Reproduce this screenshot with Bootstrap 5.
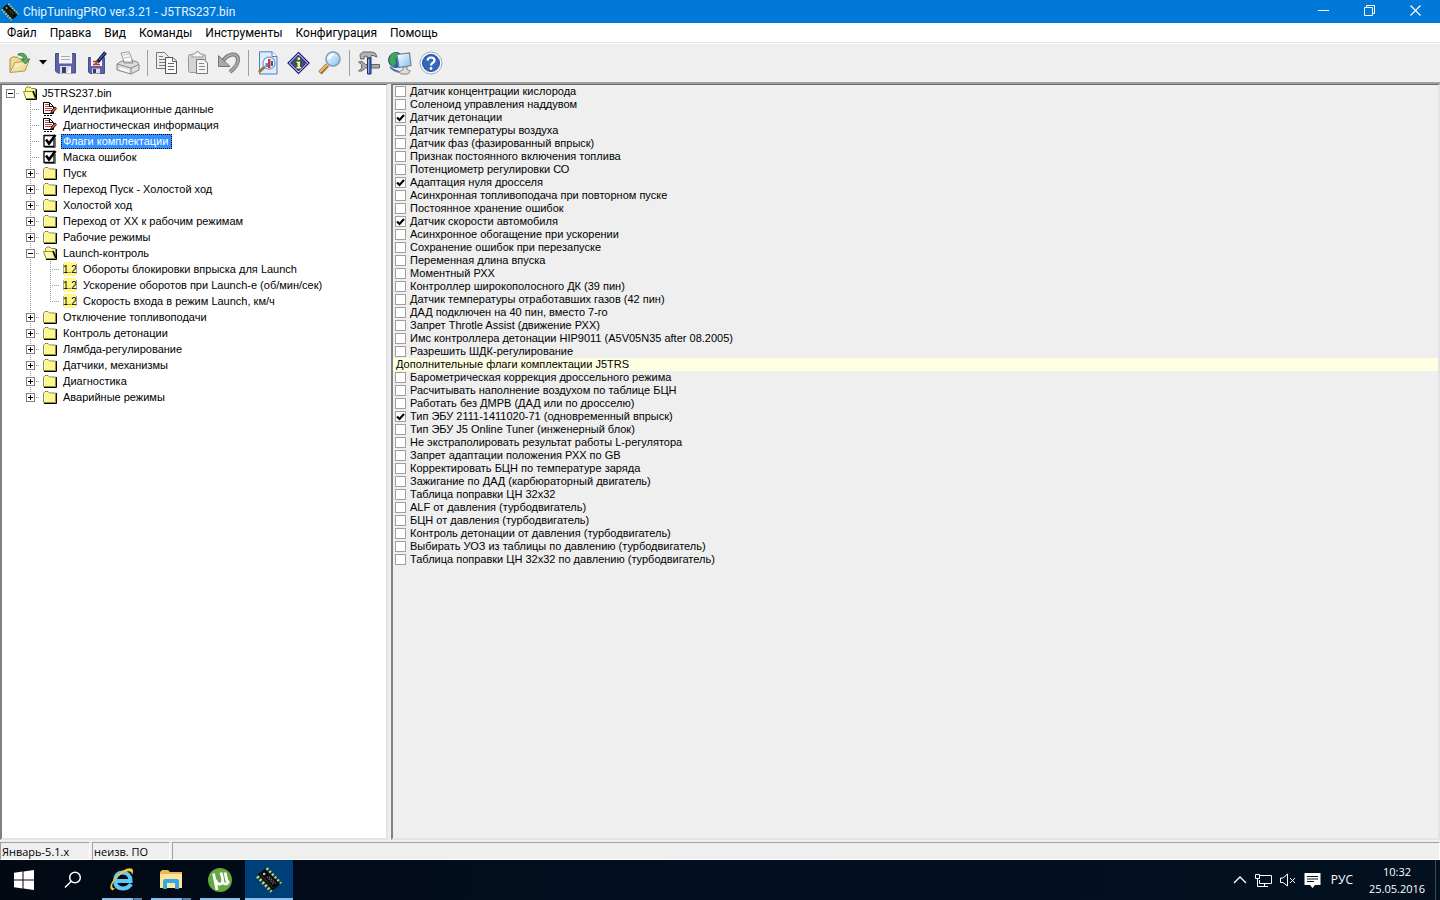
<!DOCTYPE html>
<html lang="ru">
<head>
<meta charset="utf-8">
<meta name="viewport" content="width=device-width, initial-scale=1">
<title>ChipTuningPRO ver.3.21 - J5TRS237.bin</title>
<link href="https://cdn.jsdelivr.net/npm/bootstrap@5.3.0/dist/css/bootstrap.min.css" rel="stylesheet">
<style>
body{font-family:"Open Sans","Noto Sans",sans-serif;font-size:12px;line-height:16px;color:#000;background:#efefef}
button{font:inherit;border:0;background:none;color:inherit;padding:0}
svg{display:block;flex:none}
.titlebar{height:23px;background:#0078d7;color:#e8f4ff;font-family:Roboto,"Open Sans",sans-serif}
.titlebar h1{font-size:12px;line-height:22px;margin:0 0 0 3px;font-weight:400}
.winbtn{width:46px;height:20px;display:grid;place-items:center}
.winset{margin:0 2px 2px auto}
.menubar{height:19px;background:#fff;font-family:Roboto,"Open Sans",sans-serif}
.menubar a{color:#000;text-decoration:none;padding:2px 6px 2px 7px;line-height:16px;display:block}
.toolbar{height:42px;border-top:1px solid #e6e6e6;border-bottom:2px solid #a0a0a0;box-shadow:inset 0 1px #fff;padding-left:4px}
.tool{width:31px;height:30px;display:grid;place-items:center}
.tool.drop{width:15px}
.tsep{width:1px;height:26px;background:#a0a0a0;margin:0 3px 0 4px}
.pane{border:2px solid;border-color:#696969 #e3e3e3 #e3e3e3 #808080;border-top-width:1px}
.treepane{width:388px;flex:none;background:#fff;margin-right:3px}
.legacy{font-family:"Liberation Sans",Arial,sans-serif;font-size:11px}
.tree,.tree ul{list-style:none;margin:0;padding:0}
.tree ul{margin-left:20px;background:repeating-linear-gradient(#999 0 1px,transparent 1px 2px) 10px 0/1px calc(100% - 8px) no-repeat}
.tree>li>ul{margin-left:18px}
.node{height:16px;display:flex;align-items:center}
.knot{width:20px;height:16px;display:grid;place-items:center;padding-left:1px;background:repeating-linear-gradient(90deg,#999 0 1px,transparent 1px 2px) 10px 8px/12px 1px no-repeat;flex:none}
.tree>li>.node .knot{width:18px;padding:0 1px 0 0}
.pm{width:9px;height:9px;border:1px solid #808080;background:linear-gradient(#000,#000) center/5px 1px no-repeat #fff}
.pm.plus{background:linear-gradient(#000,#000) center/5px 1px no-repeat,linear-gradient(#000,#000) center/1px 5px no-repeat #fff}
.node svg{margin:0 3px 0 2px}
.cap{border:1px solid transparent;padding:0 1px 0 0;line-height:13px;white-space:nowrap;color:#000;text-decoration:none}
.tree ul .cap{padding:0 3px 0 1px}
.cap.picked{background:#3390ff;color:#fff;border:1px dotted #000}
.flags{margin:0;padding:0;list-style:none}
.flags li{height:13px;line-height:13px;display:flex;align-items:center;padding-left:2px;white-space:nowrap}
.flags label{padding-left:4px}
.flags .group{background:#ffffe1;padding-left:3px}
.tick{appearance:none;width:11px;height:11px;margin:0;border:1px solid #a0a0a0;background:#fff;flex:none}
.tick:checked{background:#fff url("data:image/svg+xml,%3Csvg xmlns='http://www.w3.org/2000/svg' viewBox='0 0 9 9'%3E%3Cpath d='M1 4.5L3.5 7L8 2' fill='none' stroke='%23000' stroke-width='2.2'/%3E%3C/svg%3E") center/9px 9px no-repeat}
.statusbar{height:18px;margin-top:2px;gap:2px;font-size:11px}
.statusbar div{border:1px solid;border-color:#a0a0a0 #fff #fff #a0a0a0;padding-left:1px;line-height:17px}
.st1{width:90px}.st2{width:78px}
.taskbar{height:40px;background:linear-gradient(90deg,#020913,#020f22 50%,#03101f);color:#fff}
.task{width:48px;height:40px;display:grid;place-items:center;position:relative;margin-right:1px}
.task.live::after{content:"";position:absolute;left:4px;right:4px;bottom:0;height:2px;background:#86bfee}
.task.many::after{background:linear-gradient(90deg,#86bfee 31px,#24486a 31px 32px,#5486b0 32px)}
.task.front{background:#004078}
.task.front::after{left:0;right:0}
.lang{margin-left:6px;padding:0 4px}
.clock{width:56px;text-align:center;font-size:11px;line-height:17px;margin:0 10px 0 12px;white-space:nowrap}
.peek{width:5px;border-left:1px solid #3b4652;height:40px}
</style>
</head>
<body class="d-flex flex-column vh-100 overflow-hidden">
<svg width="0" height="0" class="position-absolute" aria-hidden="true">
<defs>
<linearGradient id="sky" x2="1" y2="1"><stop stop-color="#fff"/><stop offset="1" stop-color="#80c0ee"/></linearGradient>
<linearGradient id="fold" x2="1" y2="1"><stop stop-color="#fffbd8"/><stop offset="1" stop-color="#e5cf7d"/></linearGradient>
<symbol id="closed" viewBox="0 0 16 16"><path d="M2 14.500H14.500V4" fill="none" stroke="#000"/><path d="M1.500 13.500V4L3 2.500H6L7.500 4H13.500V13.500Z" fill="#fff78e" stroke="#8c8b4b"/><path d="M2.500 12.500V4.500L3.500 3.500" fill="none" stroke="#fff"/></symbol>
<symbol id="opened" viewBox="0 0 16 16"><path d="M14.500 4V14.500H4" fill="none" stroke="#000"/><path d="M3.500 13V3.500L5 2H8L9.500 3.500H13.500V13.500Z" fill="#fff78e" stroke="#8c8b4b"/><path d="M1.500 6.500H10.500L13 13.500H4Z" fill="#fffab0" stroke="#8c8b4b"/><path d="M11 6L14 13" stroke="#000" stroke-width="1.500"/></symbol>
<symbol id="edit" viewBox="0 0 16 16"><path d="M1.500 1.500H7.500L11.500 5.500V12.500H1.500Z" fill="#fff" stroke="#000"/><path d="M3 3.500H7M3 5.500H9M3 7.500H10M3 9.500H10" stroke="#b8484c"/><path d="M7.500 2V5.500H11" fill="none" stroke="#000"/><path d="M8.500 12.500L10 9L13 6L14.500 7.500L11.500 11Z" fill="#e0553a" stroke="#000" stroke-width=".8"/><path d="M2 14.500H10" stroke="#000" stroke-dasharray="2 1"/></symbol>
<symbol id="flag" viewBox="0 0 16 16"><path d="M3 14.500H13.500V5" fill="none" stroke="#777"/><path d="M2 2.500H12V13.500H2Z" fill="#fff" stroke="#000" stroke-width="1.300"/><path d="M4 6.500L7 10.500L13.500 2" fill="none" stroke="#000" stroke-width="2.600"/></symbol>
<symbol id="num" viewBox="0 0 16 16"><path d="M2 1H14V15H2Z" fill="#fff787"/><path d="M1.500 3V13M14.500 3V13" stroke="#aaa"/></symbol>
<symbol id="chip" viewBox="0 0 24 24"><path d="M2 8L15 22M9 2L22 16" stroke="#d3dc4a" stroke-width="5" stroke-dasharray="1.800 1.800"/><path d="M1.500 7L8.500 1.500L22.500 16L15.500 22Z" fill="#0c0c0c"/><path d="M4 7L15.500 19" stroke="#444" stroke-width=".8"/><circle cx="7.500" cy="6.500" r="1.200" fill="#bbb"/><path d="M10 9L16 15.500M12 9L18 15" stroke="#777" stroke-dasharray="1.500 1"/></symbol>
</defs></svg>

<header class="titlebar d-flex align-items-center">
<svg width="20" height="18"><use href="#chip"/></svg>
<h1>ChipTuningPRO ver.3.21 - J5TRS237.bin</h1>
<div class="d-flex winset">
<button class="winbtn" aria-label="Свернуть"><svg width="11" height="11"><path d="M0 5.500H11" stroke="#fff"/></svg></button>
<button class="winbtn" aria-label="Восстановить"><svg width="11" height="11"><path d="M.5 2.500H8.500V10.500H.5ZM2.500 2.500V.5H10.500V8.500H8.500" fill="none" stroke="#fff"/></svg></button>
<button class="winbtn" aria-label="Закрыть"><svg width="11" height="11"><path d="M.5 .5L10.500 10.500M10.500 .5L.5 10.500" stroke="#fff" stroke-width="1.200"/></svg></button>
</div>
</header>

<nav class="menubar d-flex" aria-label="Меню">
<a href="#">Файл</a><a href="#">Правка</a><a href="#">Вид</a><a href="#">Команды</a><a href="#">Инструменты</a><a href="#">Конфигурация</a><a href="#">Помощь</a>
</nav>

<div class="toolbar d-flex align-items-center" role="toolbar">
<button class="tool" aria-label="Открыть"><svg width="24" height="24"><path d="M2 21V8L4 6H9L11 8H17V11" fill="#eedb94" stroke="#a58e43"/><path d="M2 21.500L7 11.500L21 10L17 20Z" fill="url(#fold)" stroke="#b69c4d"/><path d="M10 3Q18 0 19 8H22L17.500 13L13 8.500H16Q15 4 10 4Z" fill="#5aa862" stroke="#28733a" stroke-width=".8"/></svg></button>
<button class="tool drop" aria-label="Недавние файлы"><svg width="8" height="5"><path d="M0 0H8L4 4.500Z"/></svg></button>
<button class="tool" aria-label="Сохранить"><svg width="24" height="24"><path d="M1.500 2.500H21.500V22H3.500L1.500 20Z" fill="#5b60a8" stroke="#4a4d8c"/><path d="M5 2H18V12.500H5Z" fill="#f3f3f3"/><path d="M7 5.500H16M7 8.500H16" stroke="#aaa"/><path d="M6 15H17V22.500H6Z" fill="#ddd"/><path d="M8 16H12V22H8Z" fill="#3b3e75"/><path d="M13 22L17 15V22Z" fill="#fff"/></svg></button>
<button class="tool" aria-label="Сохранить как"><svg width="24" height="24"><path d="M3.500 6.500H19.500V22.500H5L3.500 21Z" fill="#5b60a8" stroke="#4a4d8c"/><path d="M6 6H17V15H6Z" fill="#f7f7f7"/><path d="M8 10.500H12M8 13.500H15" stroke="#cc2d27" stroke-width="1.500"/><path d="M7 17.500H15V22.500H7Z" fill="#ddd"/><path d="M8 18H11V22H8Z" fill="#343779"/><path d="M12.500 11L20.500 1.500" stroke="#10204d" stroke-width="3.500"/><path d="M14 9L20 2" stroke="#5683c8"/><path d="M10 13.500L12.500 10.500" stroke="#b64a32" stroke-width="2"/></svg></button>
<button class="tool" aria-label="Печать"><svg width="24" height="24"><path d="M5 2L13 .8L17 11H8Z" fill="#fafafa" stroke="#999"/><path d="M7 4L13 3M8 7L14 6" stroke="#bbb"/><path d="M1 13L7 9.500L8 12H17L16 9L22 11.500L23 14V19L15 23L1 19Z" fill="#ddd" stroke="#888"/><path d="M1 13L15 17L23 13.500M15 17V23" fill="none" stroke="#888"/><path d="M4 17.500L13 20.500" stroke="#fff" stroke-width="2"/></svg></button>
<span class="tsep"></span>
<button class="tool" aria-label="Копировать"><svg width="24" height="24"><path d="M1.500 1.500H9.500L13.500 5.500V17.500H1.500Z" fill="#eee" stroke="#777"/><path d="M4 5.500H8M4 8.500H10M4 11.500H10M4 14.500H10" stroke="#777"/><path d="M10.500 6.500H18L21.500 10V22.500H10.500Z" fill="#fafafa" stroke="#555"/><path d="M17.500 6.500V10.500H21.500M13 12.500H19M13 15.500H19M13 18.500H19" fill="none" stroke="#666"/></svg></button>
<button class="tool" aria-label="Вставить"><svg width="24" height="24"><rect x="2.500" y="3.500" width="17" height="18" rx="2" fill="#d4d4d4" stroke="#999"/><path d="M6 6V3H9L10 .8H13L14 3H17V6Z" fill="#f6f6f6" stroke="#999"/><path d="M10.500 8.500H18L21.500 12V22.500H10.500Z" fill="#f5f5f5" stroke="#777"/><path d="M13 12.500H18M13 15.500H19M13 18.500H19" stroke="#888"/></svg></button>
<button class="tool" aria-label="Отменить"><svg width="24" height="24"><path d="M5 11C11 2 20 1 21 8C21.500 13 18 17 13 21" fill="none" stroke="#777" stroke-width="4"/><path d="M5 11C11 2 20 1 21 8C21.500 13 18 17 13 21" fill="none" stroke="#aaa" stroke-width="2"/><path d="M1.500 4.500V15.500H13L9 11.500L5 8Z" fill="#aaa" stroke="#777"/></svg></button>
<span class="tsep"></span>
<button class="tool" aria-label="Просмотр"><svg width="24" height="24"><path d="M3.500 .8H16L21 5.500V23H3.500Z" fill="#dcecff" stroke="#5380bd"/><path d="M16 1V5.500H21" fill="#fff" stroke="#5380bd"/><circle cx="13" cy="12" r="6" fill="#f2f9ff" stroke="#8ba9cb" stroke-width="1.500"/><path d="M9.500 12H12V16H9.500Z" fill="#5288d0"/><path d="M12 8H14.500V17H12Z" fill="#d93429"/><path d="M15 10H17V15H15Z" fill="#345bac"/><path d="M8.500 16L3 21" stroke="#a76d35" stroke-width="3"/></svg></button>
<button class="tool" aria-label="Сведения"><svg width="24" height="24"><path d="M11.500 1.500L22 12L11.500 22.500L1 12Z" fill="#fff" stroke="#141485" stroke-width="1.200"/><path d="M11.500 4L19.500 12L11.500 20L3.500 12Z" fill="#38526d" stroke="#141485"/><path d="M10.500 6.500H13V9H10.500ZM9.500 10.500H13V16H14V17.500H9.500V16H10.500V12H9.500Z" fill="#fff56e"/></svg></button>
<button class="tool" aria-label="Найти"><svg width="24" height="24"><path d="M9.500 14L2 22" stroke="#9f6d32" stroke-width="4.500"/><path d="M9.500 13.500L2 21" stroke="#edbc73" stroke-width="2"/><circle cx="15" cy="8" r="7" fill="url(#sky)" stroke="#7e9ab5" stroke-width="1.500"/><path d="M11 8Q12 4 16 3" fill="none" stroke="#fff" stroke-width="2"/></svg></button>
<span class="tsep"></span>
<button class="tool" aria-label="Настройки"><svg width="24" height="24"><path d="M3 3.500L6 1H15Q19.500 1.500 20 6L16 4.500H14V7H10V5L7 5.500V8H3.500Z" fill="#b5b5b5" stroke="#666"/><path d="M1.500 11L5 10.500L8.500 13.500H22.500V17H8.500L5 20H1.500L4.500 17.500V13.500Z" fill="#aaa" stroke="#666"/><path d="M10.500 7H14V23H10.500Z" fill="#4068b4" stroke="#1e2f60"/><path d="M11.500 8V22" stroke="#8fb0e6"/></svg></button>
<button class="tool" aria-label="Обмен данными"><svg width="24" height="24"><circle cx="8" cy="9" r="7.500" fill="#2767b2" stroke="#315984"/><path d="M1.500 7Q4 1 9 2L11 5L7 8L8 12L5 16L2 12Z" fill="#40a94c"/><path d="M9 3.500L21.500 2L23 14.500L11 16.500Z" fill="url(#sky)" stroke="#6c8094" stroke-width="1.200"/><path d="M15 16H19V18.500L22.500 20L20 23H13L11 21L15 18.500Z" fill="#ddd" stroke="#888"/><path d="M2 16L6 19L11 21" fill="none" stroke="#6670a0" stroke-width="2"/></svg></button>
<button class="tool" aria-label="Справка"><svg width="24" height="24"><circle cx="12" cy="12" r="11" fill="#f7f8fb" stroke="#9baac5"/><circle cx="12" cy="12" r="8.500" fill="#3467b8" stroke="#274d99"/><path d="M8.500 9.500Q9 6.500 12 6.500Q15.500 6.500 15.500 9.500Q15.500 11 13.500 12Q12 13 12 14.500" fill="none" stroke="#fff" stroke-width="2.200"/><circle cx="12" cy="17.500" r="1.400" fill="#fff"/></svg></button>
</div>

<main class="d-flex flex-grow-1 legacy overflow-hidden">
<nav class="pane treepane" aria-label="Разделы прошивки">
<ul class="tree">
<li><div class="node"><span class="knot"><i class="pm"></i></span><svg width="16" height="16"><use href="#opened"/></svg><a href="#" class="cap">J5TRS237.bin</a></div>
<ul>
<li class="node"><span class="knot"></span><svg width="16" height="16"><use href="#edit"/></svg><a href="#" class="cap">Идентификационные данные</a></li>
<li class="node"><span class="knot"></span><svg width="16" height="16"><use href="#edit"/></svg><a href="#" class="cap">Диагностическая информация</a></li>
<li class="node"><span class="knot"></span><svg width="16" height="16"><use href="#flag"/></svg><a href="#" class="cap picked">Флаги комплектации</a></li>
<li class="node"><span class="knot"></span><svg width="16" height="16"><use href="#flag"/></svg><a href="#" class="cap">Маска ошибок</a></li>
<li class="node"><span class="knot"><i class="pm plus"></i></span><svg width="16" height="16"><use href="#closed"/></svg><a href="#" class="cap">Пуск</a></li>
<li class="node"><span class="knot"><i class="pm plus"></i></span><svg width="16" height="16"><use href="#closed"/></svg><a href="#" class="cap">Переход Пуск - Холостой ход</a></li>
<li class="node"><span class="knot"><i class="pm plus"></i></span><svg width="16" height="16"><use href="#closed"/></svg><a href="#" class="cap">Холостой ход</a></li>
<li class="node"><span class="knot"><i class="pm plus"></i></span><svg width="16" height="16"><use href="#closed"/></svg><a href="#" class="cap">Переход от ХХ к рабочим режимам</a></li>
<li class="node"><span class="knot"><i class="pm plus"></i></span><svg width="16" height="16"><use href="#closed"/></svg><a href="#" class="cap">Рабочие режимы</a></li>
<li><div class="node"><span class="knot"><i class="pm"></i></span><svg width="16" height="16"><use href="#opened"/></svg><a href="#" class="cap">Launch-контроль</a></div>
<ul>
<li class="node"><span class="knot"></span><svg width="16" height="16"><use href="#num"/><text x="1" y="12" font-size="10">1.2</text></svg><a href="#" class="cap">Обороты блокировки впрыска для Launch</a></li>
<li class="node"><span class="knot"></span><svg width="16" height="16"><use href="#num"/><text x="1" y="12" font-size="10">1.2</text></svg><a href="#" class="cap">Ускорение оборотов при Launch-е (об/мин/сек)</a></li>
<li class="node"><span class="knot"></span><svg width="16" height="16"><use href="#num"/><text x="1" y="12" font-size="10">1.2</text></svg><a href="#" class="cap">Скорость входа в режим Launch, км/ч</a></li>
</ul></li>
<li class="node"><span class="knot"><i class="pm plus"></i></span><svg width="16" height="16"><use href="#closed"/></svg><a href="#" class="cap">Отключение топливоподачи</a></li>
<li class="node"><span class="knot"><i class="pm plus"></i></span><svg width="16" height="16"><use href="#closed"/></svg><a href="#" class="cap">Контроль детонации</a></li>
<li class="node"><span class="knot"><i class="pm plus"></i></span><svg width="16" height="16"><use href="#closed"/></svg><a href="#" class="cap">Лямбда-регулирование</a></li>
<li class="node"><span class="knot"><i class="pm plus"></i></span><svg width="16" height="16"><use href="#closed"/></svg><a href="#" class="cap">Датчики, механизмы</a></li>
<li class="node"><span class="knot"><i class="pm plus"></i></span><svg width="16" height="16"><use href="#closed"/></svg><a href="#" class="cap">Диагностика</a></li>
<li class="node"><span class="knot"><i class="pm plus"></i></span><svg width="16" height="16"><use href="#closed"/></svg><a href="#" class="cap">Аварийные режимы</a></li>
</ul></li>
</ul>
</nav>
<section class="pane flex-grow-1">
<ul class="flags">
<li><input class="tick" type="checkbox" id="f1"><label for="f1">Датчик концентрации кислорода</label></li>
<li><input class="tick" type="checkbox" id="f2"><label for="f2">Соленоид управления наддувом</label></li>
<li><input class="tick" type="checkbox" id="f3" checked><label for="f3">Датчик детонации</label></li>
<li><input class="tick" type="checkbox" id="f4"><label for="f4">Датчик температуры воздуха</label></li>
<li><input class="tick" type="checkbox" id="f5"><label for="f5">Датчик фаз (фазированный впрыск)</label></li>
<li><input class="tick" type="checkbox" id="f6"><label for="f6">Признак постоянного включения топлива</label></li>
<li><input class="tick" type="checkbox" id="f7"><label for="f7">Потенциометр регулировки СО</label></li>
<li><input class="tick" type="checkbox" id="f8" checked><label for="f8">Адаптация нуля дросселя</label></li>
<li><input class="tick" type="checkbox" id="f9"><label for="f9">Асинхронная топливоподача при повторном пуске</label></li>
<li><input class="tick" type="checkbox" id="f10"><label for="f10">Постоянное хранение ошибок</label></li>
<li><input class="tick" type="checkbox" id="f11" checked><label for="f11">Датчик скорости автомобиля</label></li>
<li><input class="tick" type="checkbox" id="f12"><label for="f12">Асинхронное обогащение при ускорении</label></li>
<li><input class="tick" type="checkbox" id="f13"><label for="f13">Сохранение ошибок при перезапуске</label></li>
<li><input class="tick" type="checkbox" id="f14"><label for="f14">Переменная длина впуска</label></li>
<li><input class="tick" type="checkbox" id="f15"><label for="f15">Моментный РХХ</label></li>
<li><input class="tick" type="checkbox" id="f16"><label for="f16">Контроллер широкополосного ДК (39 пин)</label></li>
<li><input class="tick" type="checkbox" id="f17"><label for="f17">Датчик температуры отработавших газов (42 пин)</label></li>
<li><input class="tick" type="checkbox" id="f18"><label for="f18">ДАД подключен на 40 пин, вместо 7-го</label></li>
<li><input class="tick" type="checkbox" id="f19"><label for="f19">Запрет Throtle Assist (движение РХХ)</label></li>
<li><input class="tick" type="checkbox" id="f20"><label for="f20">Имс контроллера детонации HIP9011 (A5V05N35 after 08.2005)</label></li>
<li><input class="tick" type="checkbox" id="f21"><label for="f21">Разрешить ШДК-регулирование</label></li>
<li class="group">Дополнительные флаги комплектации J5TRS</li>
<li><input class="tick" type="checkbox" id="f22"><label for="f22">Барометрическая коррекция дроссельного режима</label></li>
<li><input class="tick" type="checkbox" id="f23"><label for="f23">Расчитывать наполнение воздухом по таблице БЦН</label></li>
<li><input class="tick" type="checkbox" id="f24"><label for="f24">Работать без ДМРВ (ДАД или по дросселю)</label></li>
<li><input class="tick" type="checkbox" id="f25" checked><label for="f25">Тип ЭБУ 2111-1411020-71 (одновременный впрыск)</label></li>
<li><input class="tick" type="checkbox" id="f26"><label for="f26">Тип ЭБУ J5 Online Tuner (инженерный блок)</label></li>
<li><input class="tick" type="checkbox" id="f27"><label for="f27">Не экстраполировать результат работы L-регулятора</label></li>
<li><input class="tick" type="checkbox" id="f28"><label for="f28">Запрет адаптации положения РХХ по GB</label></li>
<li><input class="tick" type="checkbox" id="f29"><label for="f29">Корректировать БЦН по температуре заряда</label></li>
<li><input class="tick" type="checkbox" id="f30"><label for="f30">Зажигание по ДАД (карбюраторный двигатель)</label></li>
<li><input class="tick" type="checkbox" id="f31"><label for="f31">Таблица поправки ЦН 32x32</label></li>
<li><input class="tick" type="checkbox" id="f32"><label for="f32">ALF от давления (турбодвигатель)</label></li>
<li><input class="tick" type="checkbox" id="f33"><label for="f33">БЦН от давления (турбодвигатель)</label></li>
<li><input class="tick" type="checkbox" id="f34"><label for="f34">Контроль детонации от давления (турбодвигатель)</label></li>
<li><input class="tick" type="checkbox" id="f35"><label for="f35">Выбирать УОЗ из таблицы по давлению (турбодвигатель)</label></li>
<li><input class="tick" type="checkbox" id="f36"><label for="f36">Таблица поправки ЦН 32x32 по давлению (турбодвигатель)</label></li>
</ul>
</section>
</main>

<footer class="statusbar d-flex"><div class="st1">Январь-5.1.x</div><div class="st2">неизв. ПО</div><div class="flex-grow-1"></div></footer>

<div class="taskbar d-flex align-items-center">
<button class="task" aria-label="Пуск"><svg width="20" height="20"><path d="M0 2.800L8.500 1.600V9.500H0ZM9.500 1.500L20 0V9.500H9.500ZM0 10.500H8.500V18.400L0 17.200ZM9.500 10.500H20V20L9.500 18.500Z" fill="#fff"/></svg></button>
<button class="task" aria-label="Поиск"><svg width="18" height="18"><circle cx="11" cy="6.500" r="5.300" fill="none" stroke="#fff" stroke-width="1.500"/><path d="M7.200 10.200L1 16.500" stroke="#fff" stroke-width="1.500"/></svg></button>
<button class="task live many" aria-label="Internet Explorer"><svg width="26" height="26"><path d="M22 17Q19.500 21.500 13.500 21.500Q6 21 6 13.500Q6.500 6 13.500 5.500Q21.500 6 21.500 14H8" fill="none" stroke="#5fc8f5" stroke-width="4"/><path d="M3.500 23.500Q-2 21 6 10.500Q16 0 22.500 1.500Q25.500 3 23 8Q23 3.500 18 4.500Q10 7 5 14Q1 21 6 21.500Z" fill="#f5c931"/></svg></button>
<button class="task live many" aria-label="Проводник"><svg width="24" height="24"><path d="M1 4L3 2H9L11 4H23V20H1Z" fill="#e7b951"/><path d="M1 6H23V20H1Z" fill="#ffe59c"/><path d="M4 21V13Q4 11 6 11H18Q20 11 20 13V21H16V15H8V21Z" fill="#35a9e1"/></svg></button>
<button class="task live" aria-label="µTorrent"><svg width="26" height="26"><circle cx="13" cy="13" r="12" fill="#65a841"/><path d="M6.500 6.500L10 23M8.500 13Q10 18 13.500 17Q16.500 16 15.500 11.500L14 5.500M15.500 14.500Q17 18.500 21 16M18 5.500L19.500 12Q20 15.500 22.500 15" fill="none" stroke="#fff" stroke-width="2.800"/></svg></button>
<button class="task live front" aria-label="ChipTuningPRO"><svg width="26" height="26"><use href="#chip"/></svg></button>
<div class="d-flex align-items-center ms-auto">
<button class="me-2" aria-label="Скрытые значки"><svg width="14" height="10"><path d="M1 8L7 2L13 8" fill="none" stroke="#fff" stroke-width="1.300"/></svg></button>
<button class="me-2" aria-label="Сеть"><svg width="17" height="14"><path d="M5 2.500H16.500V10.500H4.500V7M.5 1.500H4.500V5.500H.5ZM2.500 5.500V13.500H13M9.500 10.500V13" fill="none" stroke="#fff"/></svg></button>
<button class="me-2" aria-label="Звук отключён"><svg width="16" height="14"><path d="M.5 5H3L7.500 1V13L3 9.500H.5Z" fill="none" stroke="#fff"/><path d="M10 5L15 10M15 5L10 10" stroke="#fff"/></svg></button>
<button aria-label="Уведомления"><svg width="17" height="17"><path d="M.5 1H16.500V13H11L8.500 16L6 13H.5Z" fill="#fff"/><path d="M3 4.500H14M3 7H14M3 9.500H10" stroke="#06162a"/></svg></button>
<button class="lang">РУС</button>
<div class="clock">10:32<br>25.05.2016</div>
<div class="peek"></div>
</div>
</div>
<script src="https://cdn.jsdelivr.net/npm/bootstrap@5.3.0/dist/js/bootstrap.bundle.min.js"></script>
</body>
</html>
